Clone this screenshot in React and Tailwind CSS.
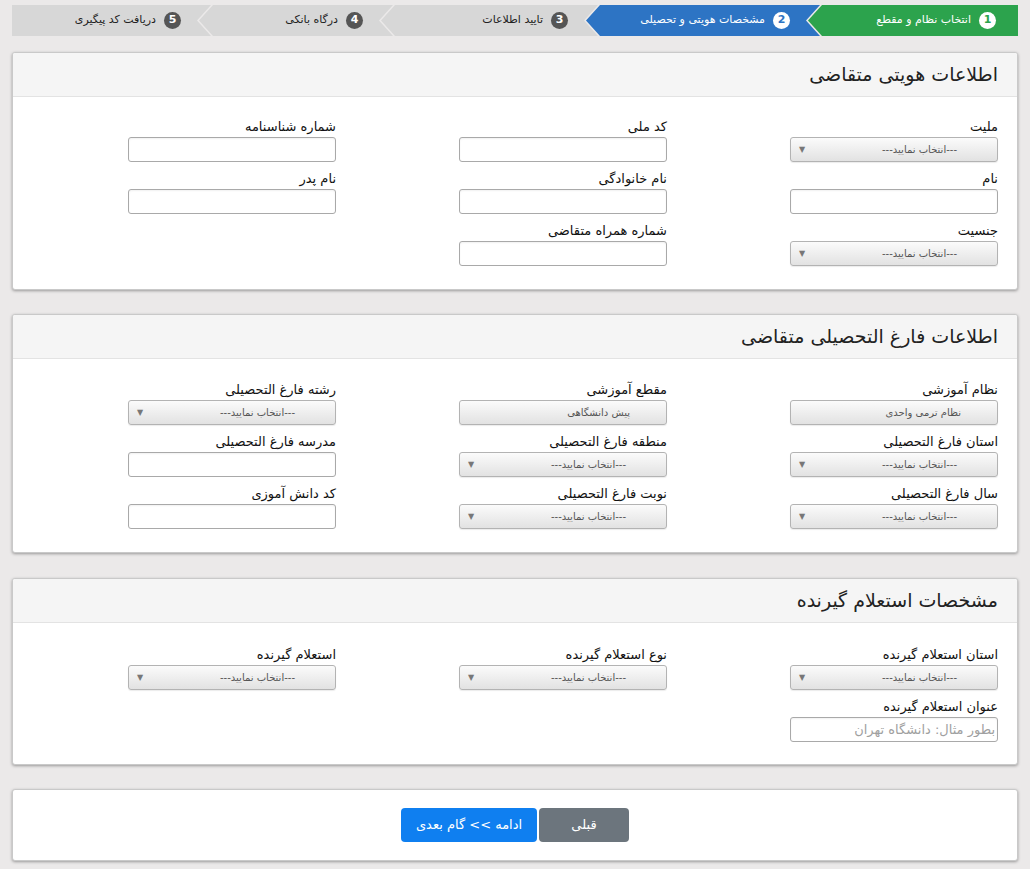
import React from 'react';

const steps = [
  { n: 1, title: 'انتخاب نظام و مقطع', kind: 'done', w: 'w-[210px]' },
  { n: 2, title: 'مشخصات هویتی و تحصیلی', kind: 'active', w: 'w-[234px]' },
  { n: 3, title: 'تایید اطلاعات', w: 'w-[217px]' },
  { n: 4, title: 'درگاه بانکی', w: 'w-[194px]' },
  { n: 5, title: 'دریافت کد پیگیری', w: 'flex-1', last: true },
];

const Steps = () => (
  <div className="flex h-[31px]">
    {steps.map((s, i) => {
      let bg = 'bg-[#d7d7d7] text-[#222]';
      let circle = 'bg-[#555] text-white';
      if (s.kind === 'done') {
        bg = 'bg-[#2ca34d] text-white';
        circle = 'bg-white text-[#2ca34d]';
      } else if (s.kind === 'active') {
        bg = 'bg-[#2d74c4] text-white';
        circle = 'bg-white text-[#2d74c4]';
      }
      let clip = '[clip-path:polygon(100%_0,calc(100%_-_14px)_50%,100%_100%,14px_100%,0_50%,14px_0)]';
      if (i === 0) clip = '[clip-path:polygon(100%_0,100%_100%,14px_100%,0_50%,14px_0)]';
      if (s.last) clip = '[clip-path:polygon(100%_0,calc(100%_-_14px)_50%,100%_100%,0_100%,0_0)]';
      return (
        <div
          key={s.n}
          className={`${s.w} ${bg} ${clip} ${i > 0 ? '-ms-3' : ''} h-full flex items-center gap-[8px] ${i === 0 ? 'pr-[22px]' : 'pr-[30px]'} shrink-0`}
        >
          <span className={`${circle} w-[17px] h-[17px] rounded-full flex items-center justify-center text-[11px] font-bold`}>
            {s.n}
          </span>
          <span className="text-[11px] whitespace-nowrap">{s.title}</span>
        </div>
      );
    })}
  </div>
);

const Select = ({ value, plain }) => (
  <div className="relative w-[208px] h-[25px] rounded-[3px] border border-[#b3b3b3] bg-gradient-to-b from-[#fbfbfb] to-[#e2e2e2] shadow-[0_1px_1px_rgba(0,0,0,0.08)] flex items-center">
    <span className={`text-[10px] text-[#555] whitespace-nowrap ${plain ? 'pr-[36px]' : 'pr-[40px]'}`}>
      {value || '---انتخاب نمایید---'}
    </span>
    {!plain && <span className="absolute left-[8px] top-[6px] text-[8px] text-[#777]">▼</span>}
  </div>
);

const Input = ({ placeholder }) => (
  <input
    className="block w-[208px] h-[25px] rounded-[3px] border border-[#a9a9a9] bg-white px-[2px] text-[13px] text-[#333] placeholder:text-[#a0a0a0] shadow-[inset_0_1px_2px_rgba(0,0,0,0.06)] outline-none"
    placeholder={placeholder}
  />
);

const Field = ({ label, select, value, plain, placeholder }) => (
  <div>
    <div className="text-[13px] text-[#111] leading-[16px] mb-[2px] whitespace-nowrap">{label}</div>
    {select ? <Select value={value} plain={plain} /> : <Input placeholder={placeholder} />}
  </div>
);

const Card = ({ title, pad, children }) => (
  <div className="bg-white border border-[#c9c9c9] rounded-[3px] shadow-[0_1px_3px_rgba(0,0,0,0.35)] overflow-hidden">
    <div className="h-[44px] bg-[#f5f5f5] border-b border-[#e3e3e3] flex items-center pr-[19px]">
      <h2 className="text-[19px] text-[#222] leading-none">{title}</h2>
    </div>
    <div className={`grid grid-cols-[303px_303px_303px] gap-x-[28px] gap-y-[9px] px-[19px] ${pad}`}>
      {children}
    </div>
  </div>
);

export default function App() {
  return (
    <div dir="rtl" className="min-h-[869px] bg-[#ebe9e9] px-[12px] pt-[5px] pb-[8px] font-['DejaVu_Sans',sans-serif]">
      <Steps />

      <div className="mt-[16px]">
        <Card title="اطلاعات هویتی متقاضی" pad="pt-[22px] pb-[23px]">
          <Field label="ملیت" select />
          <Field label="کد ملی" />
          <Field label="شماره شناسنامه" />
          <Field label="نام" />
          <Field label="نام خانوادگی" />
          <Field label="نام پدر" />
          <Field label="جنسیت" select />
          <Field label="شماره همراه متقاضی" />
        </Card>
      </div>

      <div className="mt-[24px]">
        <Card title="اطلاعات فارغ التحصیلی متقاضی" pad="pt-[23px] pb-[23px]">
          <Field label="نظام آموزشی" select plain value="نظام ترمی واحدی" />
          <Field label="مقطع آموزشی" select plain value="پیش دانشگاهی" />
          <Field label="رشته فارغ التحصیلی" select />
          <Field label="استان فارغ التحصیلی" select />
          <Field label="منطقه فارغ التحصیلی" select />
          <Field label="مدرسه فارغ التحصیلی" />
          <Field label="سال فارغ التحصیلی" select />
          <Field label="نوبت فارغ التحصیلی" select />
          <Field label="کد دانش آموزی" />
        </Card>
      </div>

      <div className="mt-[25px]">
        <Card title="مشخصات استعلام گیرنده" pad="pt-[24px] pb-[22px]">
          <Field label="استان استعلام گیرنده" select />
          <Field label="نوع استعلام گیرنده" select />
          <Field label="استعلام گیرنده" select />
          <Field label="عنوان استعلام گیرنده" placeholder="بطور مثال: دانشگاه تهران" />
        </Card>
      </div>

      <div className="mt-[24px] bg-white border border-[#c9c9c9] rounded-[3px] shadow-[0_1px_3px_rgba(0,0,0,0.35)] h-[72px] flex items-center justify-center gap-[2px]">
        <button className="w-[90px] h-[34px] rounded-[4px] bg-[#6c757d] text-white text-[13px]">قبلی</button>
        <button className="w-[136px] h-[34px] rounded-[4px] bg-[#0f7ff0] text-white text-[13px]">ادامه &gt;&gt; گام بعدی</button>
      </div>
    </div>
  );
}
